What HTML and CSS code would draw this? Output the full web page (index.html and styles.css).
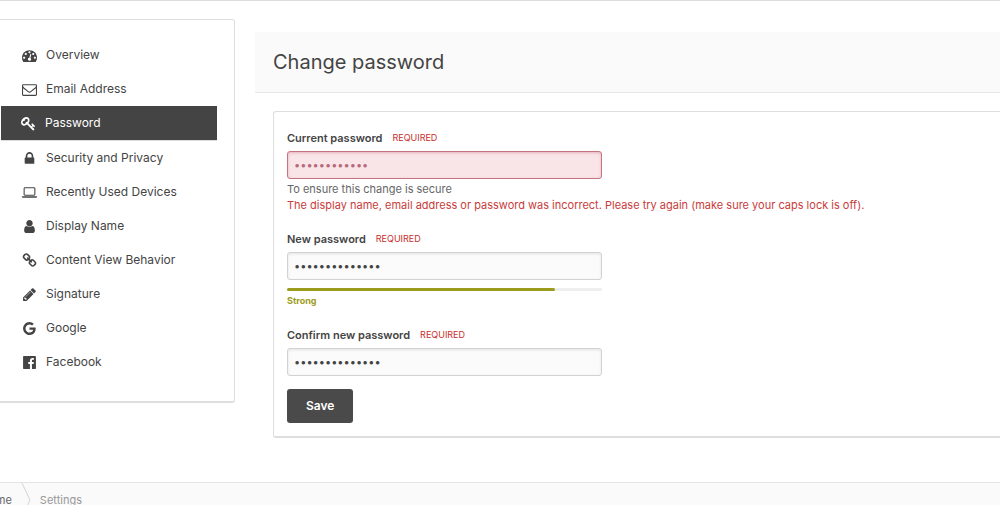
FILE: index.html
```html
<!DOCTYPE html>
<html lang="en">
<head>
  <meta charset="UTF-8">
  <meta name="viewport" content="width=device-width, initial-scale=1.0">
  <title>Change password</title>
  <link rel="stylesheet" href="styles.css">
</head>
<body>
  <div class="layout">
    <nav class="sidebar" aria-label="Settings">
      <ul class="menu">
        <li><a class="menu-item" href="#overview">
          <svg class="icon" viewBox="0 0 1792 1792" aria-hidden="true"><path d="M384 1152q0-53-37.5-90.5t-90.5-37.5-90.5 37.5-37.5 90.5 37.5 90.5 90.5 37.5 90.5-37.5 37.5-90.5zm192-448q0-53-37.5-90.5t-90.5-37.5-90.5 37.5-37.5 90.5 37.5 90.5 90.5 37.5 90.5-37.5 37.5-90.5zm428 481l101-382q6-26-7.5-48.5t-38.5-29.5-48 6.5-30 39.5l-101 382q-60 5-107 43.5t-63 98.5q-20 77 20 146t117 89 146-20 89-117q16-60-6-117t-72-91zm660-33q0-53-37.5-90.5t-90.5-37.5-90.5 37.5-37.5 90.5 37.5 90.5 90.5 37.5 90.5-37.5 37.5-90.5zm-640-640q0-53-37.5-90.5t-90.5-37.5-90.5 37.5-37.5 90.5 37.5 90.5 90.5 37.5 90.5-37.5 37.5-90.5zm448 192q0-53-37.5-90.5t-90.5-37.5-90.5 37.5-37.5 90.5 37.5 90.5 90.5 37.5 90.5-37.5 37.5-90.5zm320 448q0 261-141 483-19 29-54 29h-1402q-35 0-54-29-141-221-141-483 0-182 71-348t191-286 286-191 348-71 348 71 286 191 191 286 71 348z"/></svg>
          Overview</a></li>
        <li><a class="menu-item" href="#email">
          <svg class="icon" viewBox="0 0 1792 1792" aria-hidden="true"><path d="M1664 1504v-768q-32 36-69 66-268 206-426 338-51 43-83 67t-86.5 48.5-102.5 24.5h-2q-48 0-102.5-24.5t-86.5-48.5-83-67q-158-132-426-338-37-30-69-66v768q0 13 9.5 22.5t22.5 9.5h1472q13 0 22.5-9.5t9.5-22.5zm0-1051v-24.5l-.5-13-3-12.5-5.5-9-9-7.5-14-2.5h-1472q-13 0-22.5 9.5t-9.5 22.5q0 168 147 284 193 152 401 317 6 5 35 29.5t46 37.5 44.5 31.5 50.5 27.5 43 9h2q20 0 43-9t50.5-27.5 44.5-31.5 46-37.5 35-29.5q208-165 401-317 54-43 100.5-115.5t46.5-131.5zm128-37v1088q0 66-47 113t-113 47h-1472q-66 0-113-47t-47-113v-1088q0-66 47-113t113-47h1472q66 0 113 47t47 113z"/></svg>
          Email Address</a></li>
        <li><a class="menu-item active" href="#password" aria-current="page">
          <svg class="icon" viewBox="0 0 1792 1792" aria-hidden="true"><path d="M832 512q0-80-56-136t-136-56-136 56-56 136q0 42 19 83-41-19-83-19-80 0-136 56t-56 136 56 136 136 56 136-56 56-136q0-42-19-83 41 19 83 19 80 0 136-56t56-136zm851 704q0 17-49 66t-66 49q-9 0-28.5-16t-36.5-33-38.5-40-24.5-26l-96 96 220 220q28 28 28 68 0 42-39 81t-81 39q-40 0-68-28l-671-671q-176 131-365 131-163 0-265.5-102.5t-102.5-265.5q0-160 95-313t248-248 313-95q163 0 265.5 102.5t102.5 265.5q0 189-131 365l355 355 96-96q-3-3-26-24.5t-40-38.5-33-36.5-16-28.5q0-17 49-66t66-49q13 0 23 10 6 6 46 44.5t82 79.5 86.5 86 73 78 28.5 41z"/></svg>
          Password</a></li>
        <li><a class="menu-item" href="#security">
          <svg class="icon" viewBox="0 0 1792 1792" aria-hidden="true"><path d="M640 768h512v-192q0-106-75-181t-181-75-181 75-75 181v192zm832 96v576q0 40-28 68t-68 28h-960q-40 0-68-28t-28-68v-576q0-40 28-68t68-28h32v-192q0-184 132-316t316-132 316 132 132 316v192h32q40 0 68 28t28 68z"/></svg>
          Security and Privacy</a></li>
        <li><a class="menu-item" href="#devices">
          <svg class="icon" viewBox="0 0 1792 1792" aria-hidden="true"><path fill-rule="evenodd" d="M352 256h1088q66 0 113 47t47 113v704q0 66-47 113t-113 47h-1088q-66 0-113-47t-47-113v-704q0-66 47-113t113-47zm0 128q-32 0-32 32v704q0 32 32 32h1088q32 0 32-32v-704q0-32-32-32zM0 1344h1792v96q0 40-47 68t-113 28h-1472q-66 0-113-28t-47-68z"/></svg>
          Recently Used Devices</a></li>
        <li><a class="menu-item" href="#display-name">
          <svg class="icon" viewBox="0 0 1792 1792" aria-hidden="true"><path d="M1536 1399q0 109-62.5 187t-150.5 78h-854q-88 0-150.5-78t-62.5-187q0-85 8.5-160.5t31.5-152 58.5-131 94-89 134.5-34.5q131 128 313 128t313-128q76 0 134.5 34.5t94 89 58.5 131 31.5 152 8.5 160.5zm-256-887q0 159-112.5 271.5t-271.5 112.5-271.5-112.5-112.5-271.5 112.5-271.5 271.5-112.5 271.5 112.5 112.5 271.5z"/></svg>
          Display Name</a></li>
        <li><a class="menu-item" href="#content-view">
          <svg class="icon" viewBox="0 0 1792 1792" aria-hidden="true"><path d="M1520 1216q0-40-28-68l-208-208q-28-28-68-28-42 0-72 32 3 3 19 18.5t21.5 21.5 15 19 13 25.5 3.5 27.5q0 40-28 68t-68 28q-15 0-27.5-3.5t-25.5-13-19-15-21.5-21.5-18.5-19q-33 31-33 73 0 40 28 68l206 207q27 27 68 27 40 0 68-26l147-146q28-28 28-67zm-703-705q0-40-28-68l-206-207q-28-28-68-28-39 0-68 27l-147 146q-28 28-28 67 0 40 28 68l208 208q27 27 68 27 42 0 72-31-3-3-19-18.5t-21.5-21.5-15-19-13-25.5-3.5-27.5q0-40 28-68t68-28q15 0 27.5 3.5t25.5 13 19 15 21.5 21.5 18.5 19q33-31 33-73zm895 705q0 120-85 203l-147 146q-83 83-203 83-121 0-204-85l-206-207q-83-83-83-203 0-123 88-209l-88-88q-86 88-208 88-120 0-204-84l-208-208q-84-84-84-204t85-203l147-146q83-83 203-83 121 0 204 85l206 207q83 83 83 203 0 123-88 209l88 88q86-88 208-88 120 0 204 84l208 208q84 84 84 204z"/></svg>
          Content View Behavior</a></li>
        <li><a class="menu-item" href="#signature">
          <svg class="icon" viewBox="0 0 1792 1792" aria-hidden="true"><path d="M491 1536l91-91-235-235-91 91v107h128v128h107zm523-928q0-22-22-22-10 0-17 7l-542 542q-7 7-7 17 0 22 22 22 10 0 17-7l542-542q7-7 7-17zm-54-192l416 416-832 832h-416v-416zm683 96q0 53-37 90l-166 166-416-416 166-165q36-38 90-38 53 0 91 38l235 234q37 39 37 91z"/></svg>
          Signature</a></li>
        <li><a class="menu-item" href="#google">
          <svg class="icon" viewBox="0 0 1792 1792" aria-hidden="true"><path d="M896 786h725q12 67 12 128 0 217-91 387.5t-259.5 266.5-386.5 96q-157 0-299-60.5t-245-163.5-163.5-245-60.5-299 60.5-299 163.5-245 245-163.5 299-60.5q300 0 515 201l-209 201q-123-119-306-119-129 0-238.5 65t-173.5 176.5-64 243.5 64 243.5 173.5 176.5 238.5 65q87 0 160-24t120-60 82-82 51.5-87 22.5-78h-436v-264z"/></svg>
          Google</a></li>
        <li><a class="menu-item" href="#facebook">
          <svg class="icon" viewBox="0 0 1792 1792" aria-hidden="true"><path d="M1579 128q35 0 60 25t25 60v1366q0 35-25 60t-60 25h-391v-595h199l30-232h-229v-148q0-56 23.5-84t91.5-28l122-1v-207q-63-9-178-9-136 0-217.5 80t-81.5 226v171h-200v232h200v595h-735q-35 0-60-25t-25-60v-1366q0-35 25-60t60-25h1366z"/></svg>
          Facebook</a></li>
      </ul>
    </nav>

    <main class="content">
      <header class="page-header">
        <h1>Change password</h1>
      </header>
      <form class="card">
        <div class="field">
          <div class="field-title">
            <label for="current">Current password</label>
            <span class="required">REQUIRED</span>
          </div>
          <input class="input input-error" type="password" id="current" value="abcdefghijkl" aria-describedby="current-help current-error">
          <p class="help" id="current-help">To ensure this change is secure</p>
          <p class="help error" id="current-error">The display name, email address or password was incorrect. Please try again (make sure your caps lock is off).</p>
        </div>
        <div class="field">
          <div class="field-title">
            <label for="new">New password</label>
            <span class="required">REQUIRED</span>
          </div>
          <input class="input" type="password" id="new" value="abcdefghijklmn">
          <div class="meter"><div class="meter-bar" style="width: 85%"></div></div>
          <p class="strength">Strong</p>
        </div>
        <div class="field">
          <div class="field-title">
            <label for="confirm">Confirm new password</label>
            <span class="required">REQUIRED</span>
          </div>
          <input class="input" type="password" id="confirm" value="abcdefghijklmn">
        </div>
        <button class="save" type="button">Save</button>
      </form>
    </main>
  </div>

  <nav class="breadcrumb" aria-label="Breadcrumb">
    <a class="crumb-home" href="#home">Home</a>
    <svg class="crumb-arrow" viewBox="0 0 10 34" aria-hidden="true"><path d="M1 0L9 17L1 34"/></svg>
    <span class="crumb-current">Settings</span>
  </nav>
</body>
</html>
```

FILE: styles.css
```css
* {
  margin: 0;
  padding: 0;
  box-sizing: border-box;
}
body {
  height: 100vh;
  overflow: hidden;
  border-top: 1px solid #dcdcdc;
  background-color: #fff;
  color: #444;
  font-family: Inter, "Liberation Sans", sans-serif;
  font-size: 11px;
  line-height: 16px;
}
.layout {
  display: flex;
  align-items: flex-start;
  gap: 20px;
  padding-top: 18px;
}

/* Sidebar */
.sidebar {
  flex: 0 0 235px;
  padding: 18px 17px 22px 1px;
  border: 1px solid #dedede;
  border-left: 0;
  border-bottom-width: 2px;
  border-radius: 0 3px 3px 0;
}
.menu {
  list-style: none;
}
.menu-item {
  display: flex;
  align-items: center;
  gap: 9px;
  height: 34px;
  padding-left: 21px;
  color: #444;
  font-size: 12px;
  text-decoration: none;
}
.menu-item.active {
  height: 35px;
  padding-left: 20px;
  border-bottom: 1px solid #dedede;
  background-color: #444;
  color: #fff;
}
.icon {
  width: 15px;
  height: 15px;
  fill: currentColor;
}

/* Main column */
.content {
  flex: 1;
  min-width: 0;
  padding-top: 13px;
}
.page-header {
  padding: 16px 18px;
  border-bottom: 1px solid #e8e8e8;
  background-color: #fafafa;
}
.page-header h1 {
  font-size: 20px;
  font-weight: 400;
  line-height: 28px;
}
.card {
  margin: 18px 0 0 18px;
  padding: 18px 13px 13px;
  border: 1px solid #dedede;
  border-right: 0;
  border-bottom-width: 2px;
  border-radius: 3px 0 0 3px;
}
.field {
  margin-bottom: 18px;
}
.field:last-of-type {
  margin-bottom: 13px;
}
.field-title {
  display: flex;
  align-items: center;
  gap: 10px;
  margin-bottom: 5px;
}
.field-title label {
  font-weight: 600;
}
.required {
  color: #c82d2d;
  font-size: 9px;
}
.input {
  display: block;
  width: 100%;
  max-width: 315px;
  height: 28px;
  padding: 0 6px;
  border: 1px solid #d2d2d2;
  border-radius: 3px;
  background-color: #fbfbfb;
  box-shadow: inset 0 1px 3px rgba(0, 0, 0, 0.1);
  color: #444;
  font: inherit;
}
.input-error {
  border-color: #c47381;
  background-color: #f9e5e8;
  box-shadow: inset 0 1px 3px rgba(180, 60, 80, 0.3);
  color: #b86a79;
}
.help {
  color: #666;
}
.input + .help {
  margin-top: 2px;
}
.help.error {
  color: #c83c3c;
}
.meter {
  max-width: 315px;
  height: 3px;
  margin-top: 8px;
  border-radius: 2px;
  background-color: #eee;
}
.meter-bar {
  height: 100%;
  border-radius: 2px;
  background-color: #9c9c1c;
}
.strength {
  margin-top: 2px;
  color: #9c9c1c;
  font-size: 9px;
  font-weight: 700;
}
.save {
  height: 34px;
  padding: 0 19px;
  border: 0;
  border-radius: 3px;
  background-color: #4a4a4a;
  color: #fff;
  font: inherit;
  font-size: 12px;
  font-weight: 600;
}

/* Breadcrumb */
.breadcrumb {
  display: flex;
  align-items: center;
  gap: 9px;
  height: 35px;
  margin-top: 44px;
  padding-right: 20px;
  border-top: 1px solid #e4e4e4;
  background-color: #fafafa;
}
.crumb-home {
  margin-left: -19px;
  color: #666;
  text-decoration: none;
}
.crumb-arrow {
  width: 10px;
  height: 34px;
  fill: none;
  stroke: #d4d4d4;
}
.crumb-current {
  color: #999;
}
```
